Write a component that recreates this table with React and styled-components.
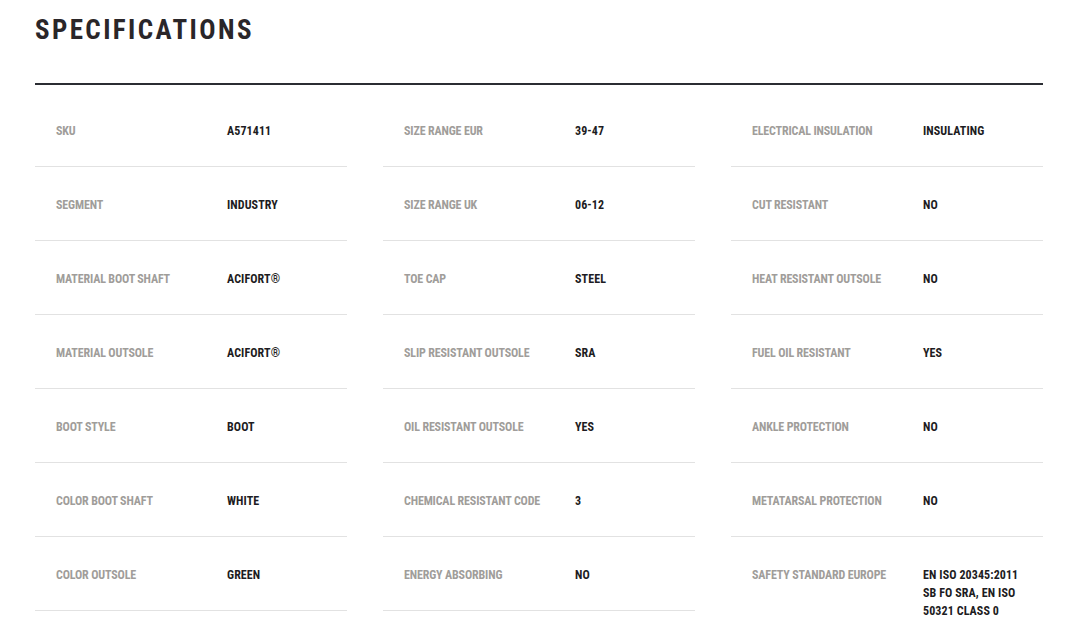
import React from "react";
import styled, { createGlobalStyle } from "styled-components";

const Global = createGlobalStyle`
  html, body { margin: 0; padding: 0; background: #ffffff; }
  body { font-family: Roboto, "Roboto Condensed", "DejaVu Sans Condensed", sans-serif; }
`;

const Page = styled.div`
  padding: 16px 35px 0 35px;
  width: 1008px;
`;

const Title = styled.h2`
  margin: 0;
  font-size: 27px;
  line-height: 28px;
  font-weight: 700;
  font-stretch: 85%;
  letter-spacing: 2.4px;
  color: #2a2629;
  text-transform: uppercase;
`;

const Rule = styled.div`
  margin-top: 39px;
  height: 2px;
  background: #2b2d33;
`;

const Grid = styled.div`
  margin-top: 8px;
  display: grid;
  grid-template-columns: repeat(3, 312px);
  column-gap: 36px;
  align-items: start;
`;

const Column = styled.div`
  display: flex;
  flex-direction: column;
`;

const Row = styled.div`
  display: grid;
  grid-template-columns: 192px 1fr;
  padding: 29px 0 26px 0;
  border-bottom: 1px solid #e2e2e2;
`;

const Label = styled.div`
  padding-left: 21px;
  font-size: 12px;
  line-height: 18px;
  font-weight: 700;
  font-stretch: 75%;
  color: #a09d9a;
  letter-spacing: -0.15px;
`;

const Value = styled.div`
  font-size: 12px;
  line-height: 18px;
  font-weight: 700;
  font-stretch: 75%;
  color: #1d1c22;
  letter-spacing: 0.1px;
  padding-right: 20px;
`;

const columns = [
  [
    ["SKU", "A571411"],
    ["SEGMENT", "INDUSTRY"],
    ["MATERIAL BOOT SHAFT", "ACIFORT®"],
    ["MATERIAL OUTSOLE", "ACIFORT®"],
    ["BOOT STYLE", "BOOT"],
    ["COLOR BOOT SHAFT", "WHITE"],
    ["COLOR OUTSOLE", "GREEN"],
  ],
  [
    ["SIZE RANGE EUR", "39-47"],
    ["SIZE RANGE UK", "06-12"],
    ["TOE CAP", "STEEL"],
    ["SLIP RESISTANT OUTSOLE", "SRA"],
    ["OIL RESISTANT OUTSOLE", "YES"],
    ["CHEMICAL RESISTANT CODE", "3"],
    ["ENERGY ABSORBING", "NO"],
  ],
  [
    ["ELECTRICAL INSULATION", "INSULATING"],
    ["CUT RESISTANT", "NO"],
    ["HEAT RESISTANT OUTSOLE", "NO"],
    ["FUEL OIL RESISTANT", "YES"],
    ["ANKLE PROTECTION", "NO"],
    ["METATARSAL PROTECTION", "NO"],
    ["SAFETY STANDARD EUROPE", "EN ISO 20345:2011 SB FO SRA, EN ISO 50321 CLASS 0"],
  ],
];

export default function App() {
  return (
    <>
      <Global />
      <Page>
        <Title>Specifications</Title>
        <Rule />
        <Grid>
          {columns.map((col, i) => (
            <Column key={i}>
              {col.map(([k, v]) => (
                <Row key={k}>
                  <Label>{k}</Label>
                  <Value>{v}</Value>
                </Row>
              ))}
            </Column>
          ))}
        </Grid>
      </Page>
    </>
  );
}
